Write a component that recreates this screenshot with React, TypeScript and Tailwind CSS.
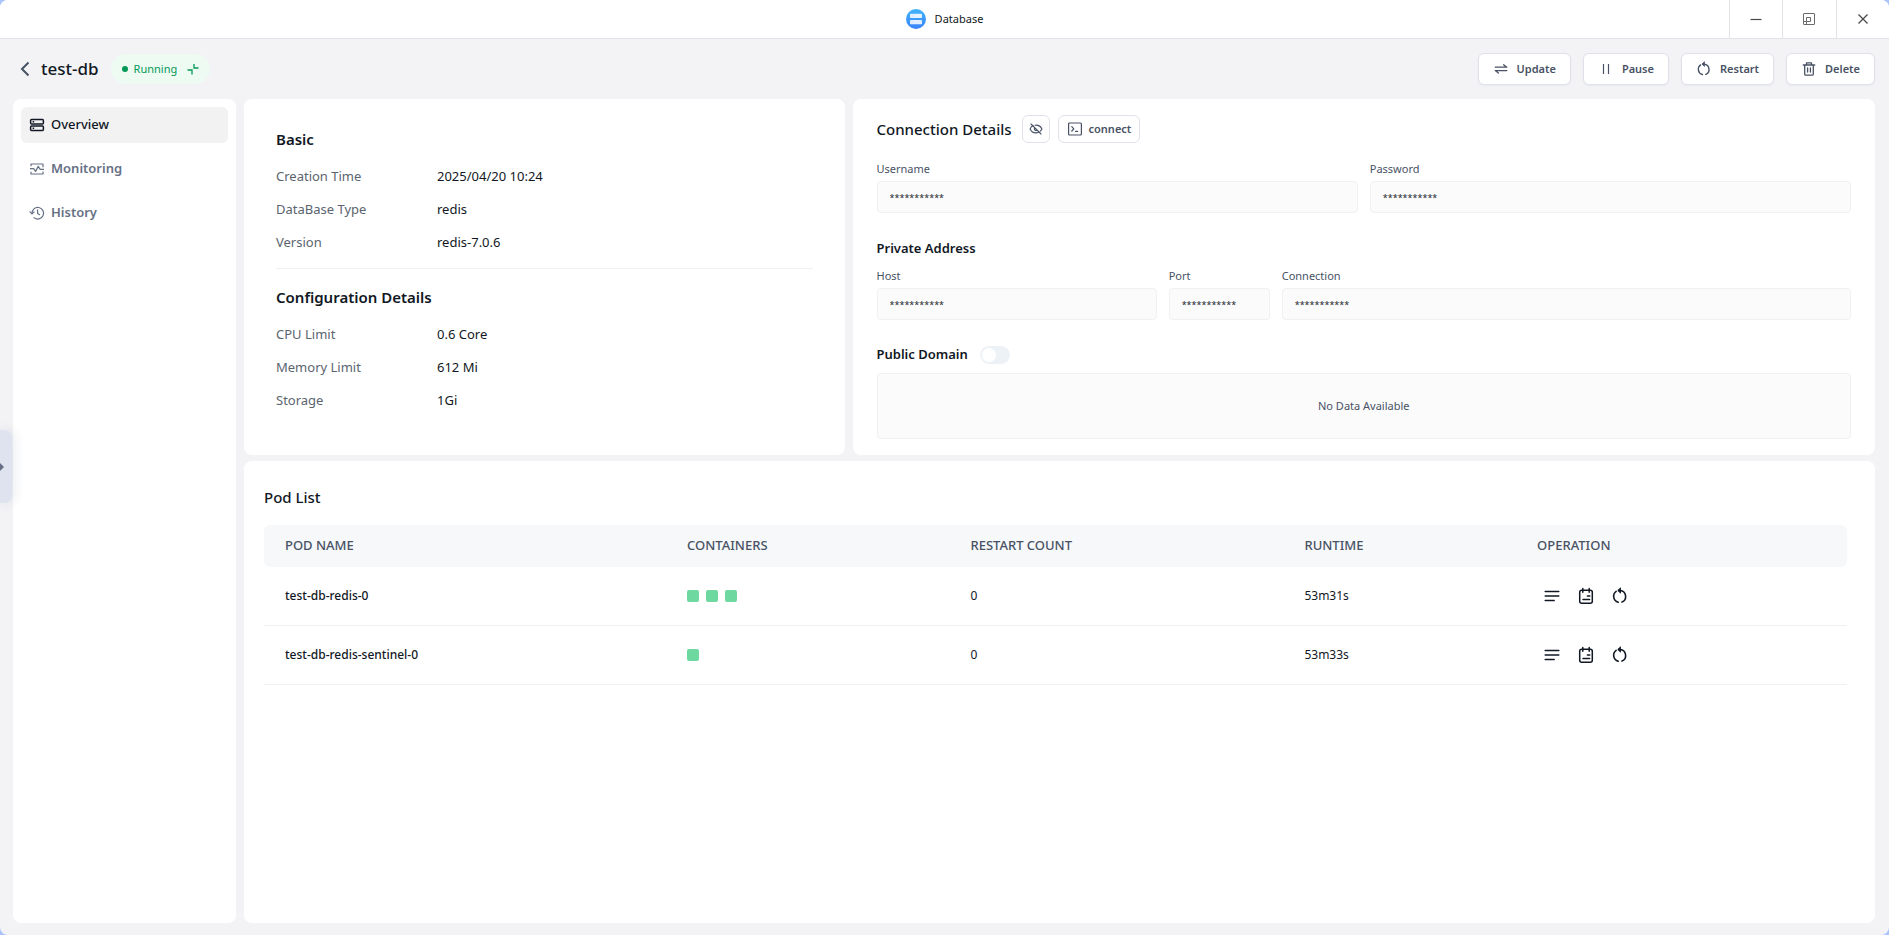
import React from "react";

type IconProps = { className?: string };

const RestartIcon = ({ className }: IconProps) => (
  <svg viewBox="0 0 16 16" className={className} fill="none" stroke="currentColor" strokeWidth="1.4" strokeLinecap="round" strokeLinejoin="round" aria-hidden="true">
    <path d="M7 3.1h1.2a5.4 5.4 0 0 1 1.6 10.3" />
    <path d="M4.6 3.9a5.4 5.4 0 0 0 1.8 9.6" />
    <path d="M8.2 1 6 3.1l2.2 2.1z" fill="currentColor" strokeWidth="0.8" />
  </svg>
);

const UpdateIcon = () => (
  <svg viewBox="0 0 16 16" className="size-4" fill="none" stroke="currentColor" strokeWidth="1.3" strokeLinecap="round" strokeLinejoin="round" aria-hidden="true">
    <path d="M2.2 6.2h11.6L10.6 3.8" />
    <path d="M13.8 9.6H2.2l3.2 2.4" />
  </svg>
);

const PauseIcon = () => (
  <svg viewBox="0 0 16 16" className="size-4" stroke="currentColor" strokeWidth="1.2" aria-hidden="true">
    <path d="M5.5 3v10M10.5 3v10" />
  </svg>
);

const TrashIcon = () => (
  <svg viewBox="0 0 16 16" className="size-4" fill="none" stroke="currentColor" strokeWidth="1.3" strokeLinecap="round" strokeLinejoin="round" aria-hidden="true">
    <path d="M2.3 4h11.4M5.5 4V1.9h5V4M3.7 4v8.9c0 .8.4 1.3 1.2 1.3h6.2c.8 0 1.2-.5 1.2-1.3V4M6.6 7v4M9.4 7v4" />
  </svg>
);

const OverviewIcon = () => (
  <svg viewBox="0 0 16 16" className="size-4" fill="none" stroke="currentColor" strokeWidth="1.5" aria-hidden="true">
    <rect x="1.6" y="2.4" width="12.8" height="4.6" rx="1" />
    <rect x="1.6" y="9" width="12.8" height="4.6" rx="1" />
    <path d="M3.6 4.7h1.6M3.6 11.3h1.6" />
  </svg>
);

const MonitoringIcon = () => (
  <svg viewBox="0 0 16 16" className="size-4" fill="none" stroke="currentColor" strokeWidth="1.2" strokeLinejoin="round" aria-hidden="true">
    <path d="M2 5.2V3h12v3.2M2 10.8V13h12v-2.4" />
    <path d="M1 7.6h3.6l2 2.8 2.6-5 2 3h3.8" />
  </svg>
);

const HistoryIcon = () => (
  <svg viewBox="0 0 16 16" className="size-4" fill="none" stroke="currentColor" strokeWidth="1.2" strokeLinecap="round" strokeLinejoin="round" aria-hidden="true">
    <path d="M3 8.6a5.8 5.8 0 1 1 2 4" />
    <path d="M1 6.8 3 8.9l2.1-2M8.6 4.8V8.4l2 1.3" />
  </svg>
);

const DatabaseLogo = () => (
  <svg viewBox="0 0 20 20" className="size-5" aria-hidden="true">
    <defs>
      <linearGradient id="logo" x1="0" y1="0" x2="0" y2="1">
        <stop offset="0" stopColor="#3fb4fb" />
        <stop offset="1" stopColor="#3b82fb" />
      </linearGradient>
    </defs>
    <circle cx="10" cy="10" r="10" fill="url(#logo)" />
    <rect x="4" y="4.8" width="12" height="4.2" rx="0.8" fill="#e3f2ff" />
    <rect x="4" y="11" width="12" height="4.2" rx="0.8" fill="#e3efff" />
    <path d="M5.5 7h2M5.5 13.1h2" stroke="#b5d8ff" strokeWidth="0.6" />
  </svg>
);

const CompressIcon = () => (
  <svg viewBox="0 0 12 12" className="size-3" fill="none" stroke="currentColor" strokeWidth="1.3" aria-hidden="true">
    <path d="M7 1v4h4.500M.5 7H5v4.500" />
  </svg>
);

const EyeOffIcon = () => (
  <svg viewBox="0 0 14 14" className="size-[14px]" fill="none" stroke="currentColor" strokeWidth="1.1" strokeLinecap="round" aria-hidden="true">
    <path d="M4.2 3.6C2.6 4.4 1.6 5.7 1.1 7c1 2.300 3.2 3.9 5.9 3.9 1 0 1.9-.2 2.7-.6M6.1 3.2c3.1-.3 5.7 1.3 6.8 3.8-.4.9-.9 1.6-1.6 2.2" />
    <path d="M2 2l10 10M5.6 5.8a1.9 1.9 0 0 0 2.6 2.6" />
  </svg>
);

const TerminalIcon = () => (
  <svg viewBox="0 0 16 16" className="size-4" fill="none" stroke="currentColor" strokeWidth="1.2" strokeLinecap="round" strokeLinejoin="round" aria-hidden="true">
    <rect x="1.6" y="2" width="12.8" height="12" rx="1" />
    <path d="M4.8 5.6 6.8 7.8l-2 2.2M8.6 10.4h2" />
  </svg>
);

const LogsIcon = () => (
  <svg viewBox="0 0 18 18" className="size-[18px]" stroke="currentColor" strokeWidth="1.5" strokeLinecap="round" aria-hidden="true">
    <path d="M2.2 4.500h13.600M2.2 9h13.600M2.2 13.500h9" />
  </svg>
);

const EventsIcon = () => (
  <svg viewBox="0 0 18 18" className="size-[18px]" fill="none" stroke="currentColor" strokeWidth="1.5" strokeLinecap="round" aria-hidden="true">
    <rect x="2.7" y="3.2" width="12.6" height="13" rx="2" />
    <path d="M5.8 1.4v3.8M12.2 1.4v3.8M10.4 9h2.4M6 12.6h6.6" />
  </svg>
);

const actions = [
  { label: "Update", icon: <UpdateIcon /> },
  { label: "Pause", icon: <PauseIcon /> },
  { label: "Restart", icon: <RestartIcon className="size-4" /> },
  { label: "Delete", icon: <TrashIcon /> },
];

const navItems = [
  { label: "Overview", icon: <OverviewIcon />, active: true },
  { label: "Monitoring", icon: <MonitoringIcon />, active: false },
  { label: "History", icon: <HistoryIcon />, active: false },
];

const basic = [
  ["Creation Time", "2025/04/20 10:24"],
  ["DataBase Type", "redis"],
  ["Version", "redis-7.0.6"],
];

const config = [
  ["CPU Limit", "0.6 Core"],
  ["Memory Limit", "612 Mi"],
  ["Storage", "1Gi"],
];

const pods = [
  { name: "test-db-redis-0", containers: 3, restarts: 0, runtime: "53m31s" },
  { name: "test-db-redis-sentinel-0", containers: 1, restarts: 0, runtime: "53m33s" },
];

const MASK = "***********";

function Details({ title, rows }: { title: string; rows: string[][] }) {
  return (
    <section>
      <h2 className="text-[15px] leading-6 font-semibold">{title}</h2>
      <dl className="mt-[9px]">
        {rows.map(([k, v]) => (
          <div key={k} className="flex h-[33px] items-center text-[13px]">
            <dt className="w-[161px] text-[#5a646e]">{k}</dt>
            <dd>{v}</dd>
          </div>
        ))}
      </dl>
    </section>
  );
}

function Field({ id, label }: { id: string; label: string }) {
  return (
    <div className="min-w-0">
      <label htmlFor={id} className="block text-[11px] leading-4 text-[#485264]">
        {label}
      </label>
      <input
        id={id}
        readOnly
        value={MASK}
        className="mt-1 block h-8 w-full rounded border border-[#f0f1f3] bg-[#fbfbfc] px-3 text-[9px] text-[#24282c] outline-none"
      />
    </div>
  );
}

export default function App() {
  return (
    <div className="bg-[#a9c4fa] font-['Noto_Sans','Segoe_UI',sans-serif] text-[#111824]">
      <div className="relative flex min-h-screen flex-col overflow-hidden rounded-lg bg-[#f3f3f5]">
        <div className="grid h-[39px] grid-cols-[1fr_auto_1fr] border-b border-[#e2e3e6] bg-white">
          <div />
          <div className="flex items-center gap-[9px] text-[11px]">
            <DatabaseLogo />
            Database
          </div>
          <div className="grid w-40 grid-cols-3 justify-self-end text-[#4a4a4a]">
            <button aria-label="Minimize" className="grid place-items-center border-l border-[#e2e3e6]">
              <svg viewBox="0 0 12 12" className="size-3" stroke="currentColor" strokeWidth="1.2">
                <path d="M.5 6.5h11" />
              </svg>
            </button>
            <button aria-label="Restore" className="grid place-items-center border-l border-[#e2e3e6] text-[#6b6b6b]">
              <svg viewBox="0 0 12 12" className="size-3" fill="none" stroke="currentColor">
                <rect x=".5" y=".5" width="11" height="11" rx=".5" />
                <path d="M3.5 8.500v-4h4v4zM.5 8.500h3v3" />
              </svg>
            </button>
            <button aria-label="Close" className="grid place-items-center border-l border-[#e2e3e6]">
              <svg viewBox="0 0 12 12" className="size-3" stroke="currentColor" strokeWidth="1.3">
                <path d="M1.5 1.5l9 9M10.5 1.5l-9 9" />
              </svg>
            </button>
          </div>
        </div>

        <header className="flex h-[60px] items-center pr-[14px] pl-5">
          <button aria-label="Back" className="text-[#485264]">
            <svg viewBox="0 0 10 16" className="h-4 w-[10px]" fill="none" stroke="currentColor" strokeWidth="2">
              <path d="M8.5 1.5 2 8l6.5 6.5" />
            </svg>
          </button>
          <h1 className="ml-[11px] text-[17px] font-medium">test-db</h1>
          <div className="ml-3 flex h-[30px] items-center rounded-full bg-[#edfbf3] px-[11px] text-[11px] text-[#039855]">
            <span className="mr-[6px] size-[6px] rounded-full bg-[#039855]" />
            Running
            <button aria-label="Status details" className="ml-[10px]">
              <CompressIcon />
            </button>
          </div>
          <div className="ml-auto flex gap-3">
            {actions.map((a) => (
              <button
                key={a.label}
                className="flex h-8 items-center gap-2 rounded-md border border-[#dfe2ea] bg-white px-[14px] text-[11px] font-semibold text-[#485264] shadow-[0_1px_2px_rgba(19,51,107,0.05)]"
              >
                {a.icon}
                {a.label}
              </button>
            ))}
          </div>
        </header>

        <div className="flex flex-1 gap-2 pr-[14px] pb-3 pl-[13px]">
          <nav className="flex w-[223px] shrink-0 flex-col gap-2 rounded-lg bg-white p-2">
            {navItems.map((n) => (
              <a
                key={n.label}
                href="#"
                className={
                  n.active
                    ? "flex h-9 items-center gap-[6px] rounded-md bg-[#f2f2f2] px-2 text-[13px] font-medium text-[#111824]"
                    : "flex h-9 items-center gap-[6px] rounded-md px-2 text-[13px] font-semibold text-[#667085]"
                }
              >
                {n.icon}
                {n.label}
              </a>
            ))}
          </nav>

          <main className="flex min-w-0 flex-1 flex-col gap-[6px]">
            <div className="grid grid-cols-[37fr_63fr] gap-2">
              <div className="rounded-lg bg-white px-8 pt-7">
                <Details title="Basic" rows={basic} />
                <hr className="mt-[9px] mb-4 border-[#eff0f1]" />
                <Details title="Configuration Details" rows={config} />
              </div>

              <div className="rounded-lg bg-white px-6 py-4">
                <div className="flex h-7 items-center">
                  <h2 className="text-[15px] font-medium">Connection Details</h2>
                  <button aria-label="Toggle credentials" className="ml-[10px] grid size-7 place-items-center rounded-md border border-[#dfe2ea] text-[#485264]">
                    <EyeOffIcon />
                  </button>
                  <button className="ml-2 flex h-7 items-center gap-[6px] rounded-md border border-[#dfe2ea] px-2 text-[11px] font-semibold text-[#485264]">
                    <TerminalIcon />
                    connect
                  </button>
                </div>
                <div className="mt-[18px] grid grid-cols-2 gap-3">
                  <Field id="username" label="Username" />
                  <Field id="password" label="Password" />
                </div>
                <h3 className="mt-[25px] text-[13px] leading-5 font-semibold">Private Address</h3>
                <div className="mt-[10px] grid grid-cols-[280fr_101fr_569fr] gap-3">
                  <Field id="host" label="Host" />
                  <Field id="port" label="Port" />
                  <Field id="connection" label="Connection" />
                </div>
                <div className="mt-[25px] flex h-5 items-center gap-3">
                  <label htmlFor="public" className="text-[13px] font-semibold">
                    Public Domain
                  </label>
                  <input
                    id="public"
                    type="checkbox"
                    role="switch"
                    className="h-[18px] w-[30px] appearance-none rounded-full bg-[#edf2f7] p-[2px] before:block before:size-[14px] before:rounded-full before:bg-white checked:bg-[#219bf4] checked:before:ml-3"
                  />
                </div>
                <div className="mt-2 flex h-[66px] items-center justify-center rounded border border-[#f0f1f3] bg-[#fbfbfc] text-[11px] text-[#485264]">
                  No Data Available
                </div>
              </div>
            </div>

            <div className="flex-1 rounded-lg bg-white pt-6 pr-7 pl-5">
              <h2 className="text-[15px] leading-6 font-medium">Pod List</h2>
              <table className="mt-4 w-full table-fixed border-separate border-spacing-0 text-left text-xs">
                <colgroup>
                  <col className="w-[25.4%]" />
                  <col className="w-[17.9%]" />
                  <col className="w-[21.1%]" />
                  <col className="w-[14.7%]" />
                  <col className="w-[20.9%]" />
                </colgroup>
                <thead>
                  <tr className="h-[42px] text-[13px] text-[#485264]">
                    {["POD NAME", "CONTAINERS", "RESTART COUNT", "RUNTIME", "OPERATION"].map((h) => (
                      <th key={h} scope="col" className="bg-[#f7f8fa] px-[21px] font-medium first:rounded-l-md last:rounded-r-md">
                        {h}
                      </th>
                    ))}
                  </tr>
                </thead>
                <tbody className="[&_td]:border-b [&_td]:border-[#eff0f3] [&_td]:px-[21px]">
                  {pods.map((p) => (
                    <tr key={p.name} className="h-[59px]">
                      <td className="font-medium">{p.name}</td>
                      <td>
                        <div className="flex gap-[7px]">
                          {Array.from({ length: p.containers }, (_, i) => (
                            <span key={i} className="size-3 rounded-[2px] bg-[#6dd9a0]" />
                          ))}
                        </div>
                      </td>
                      <td>{p.restarts}</td>
                      <td>{p.runtime}</td>
                      <td>
                        <div className="flex gap-4 pl-[6px]">
                          <button aria-label="Logs"><LogsIcon /></button>
                          <button aria-label="Events"><EventsIcon /></button>
                          <button aria-label="Restart pod"><RestartIcon className="size-[18px]" /></button>
                        </div>
                      </td>
                    </tr>
                  ))}
                </tbody>
              </table>
            </div>
          </main>
        </div>

        <button
          aria-label="Expand panel"
          className="absolute top-[430px] left-0 flex h-[73px] w-3 items-center rounded-r-lg bg-[#dfe3f0] text-[#667085] shadow-[2px_0_12px_rgba(19,51,107,0.1)]"
        >
          <svg viewBox="0 0 4 8" className="h-2 w-1" fill="currentColor">
            <path d="M0 0l4 4-4 4z" />
          </svg>
        </button>
      </div>
    </div>
  );
}
